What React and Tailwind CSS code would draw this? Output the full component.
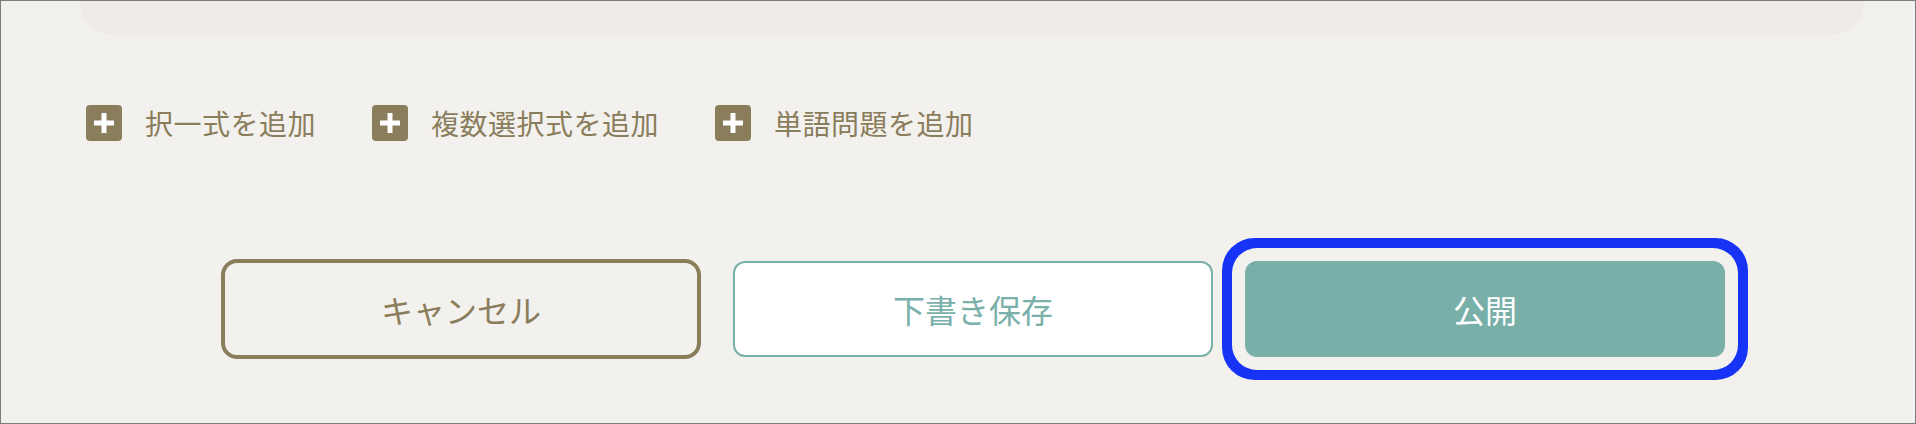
import React from "react";

const font = { fontFamily: '"Noto Sans CJK JP", "Noto Sans", sans-serif' };

function PlusBox() {
  return (
    <svg width="36" height="36" viewBox="0 0 36 36" className="shrink-0">
      <rect x="0" y="0" width="36" height="36" rx="4" fill="#8a7d5b" />
      <rect x="8" y="15.5" width="20" height="5" fill="#ffffff" />
      <rect x="15.5" y="8" width="5" height="20" fill="#ffffff" />
    </svg>
  );
}

function AddItem({ label }) {
  return (
    <button className="flex items-center gap-[23px] text-[28px] leading-none tracking-[0.5px] text-[#8a7d5b]">
      <PlusBox />
      <span>{label}</span>
    </button>
  );
}

export default function App() {
  return (
    <div
      className="w-[1916px] h-[424px] overflow-hidden border border-[#7d7d7d] bg-[#f3f1ed]"
      style={font}
    >
      <div className="ml-[79px] mr-[51px]">
        <div className="h-[34px] rounded-b-[32px] bg-[#efebe7]" />
        <div className="mt-[70px] flex h-[36px] items-center gap-[56px] pl-[6px]">
          <AddItem label="択一式を追加" />
          <AddItem label="複数選択式を追加" />
          <AddItem label="単語問題を追加" />
        </div>
        <div className="mt-[118px] flex items-center justify-center gap-[32px] pl-[2px]">
          <button className="flex h-[100px] w-[480px] items-center justify-center rounded-[16px] border-4 border-[#8a7d5b] text-[32px] font-normal text-[#8a7d5b]">
            キャンセル
          </button>
          <button className="flex h-[96px] w-[480px] items-center justify-center rounded-[12px] border-2 border-[#7ab0aa] bg-white text-[32px] font-normal text-[#7ab0aa]">
            下書き保存
          </button>
          <button className="flex h-[96px] w-[480px] items-center justify-center rounded-[12px] bg-[#78afa9] text-[32px] font-normal text-white ring-[10px] ring-[#1733f6] ring-offset-[13px] ring-offset-[#f3f1ed]">
            公開
          </button>
        </div>
      </div>
    </div>
  );
}
